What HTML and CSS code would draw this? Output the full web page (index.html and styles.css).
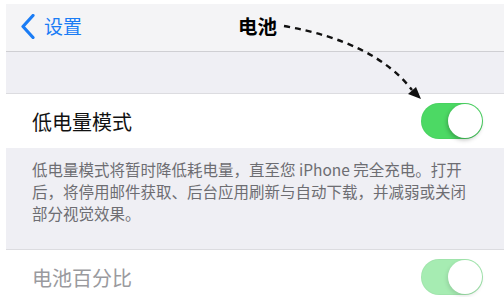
FILE: index.html
```html
<!DOCTYPE html>
<html lang="zh-CN">
<head>
<meta charset="utf-8">
<link rel="stylesheet" href="styles.css">
</head>
<body>
<div class="screen">
  <div class="nav">
    <div class="back">
      <svg class="chev" width="14" height="25" viewBox="0 0 14 25"><path d="M12 1.5 L2 12.5 L12 23.5" fill="none" stroke="#1a7cf5" stroke-width="3.2" stroke-linecap="round" stroke-linejoin="round"/></svg>
      <span>设置</span>
    </div>
    <div class="title">电池</div>
    <div></div>
  </div>
  <div class="gap"></div>
  <div class="row">
    <span class="label">低电量模式</span>
    <span class="toggle"><span class="knob"></span></span>
  </div>
  <div class="note">
    <div class="line">低电量模式将暂时降低耗电量，直至您 iPhone 完全充电。打开</div>
    <div class="line">后，将停用邮件获取、后台应用刷新与自动下载，并减弱或关闭</div>
    <div class="line">部分视觉效果。</div>
  </div>
  <div class="row dim">
    <span class="label">电池百分比</span>
    <span class="toggle"><span class="knob"></span></span>
  </div>
  <svg class="arrow" width="504" height="120" viewBox="0 0 504 120">
    <path d="M284 26 Q 375 42 412 90" fill="none" stroke="#111" stroke-width="2.4" stroke-dasharray="6 5"/>
    <path d="M421 99 L408 94 L416 87 Z" fill="#111"/>
  </svg>
</div>
</body>
</html>
```
FILE: styles.css
```css
html, body {
  margin: 0;
  padding: 0;
  background: #fff;
}
body {
  font-family: "Noto Sans CJK SC", "Noto Sans", sans-serif;
  width: 504px;
  height: 297px;
  overflow: hidden;
}
.screen {
  position: relative;
  padding: 4px 0 0 6px;
}
.nav {
  background: #f4f4f6;
  border-bottom: 1px solid #cfcfd3;
  display: grid;
  grid-template-columns: 1fr auto 1fr;
  align-items: center;
  padding-bottom: 3px;
  box-sizing: border-box;
  height: 48px;
}
.back {
  display: flex;
  align-items: center;
  gap: 9px;
  padding-left: 15px;
  color: #1a7cf5;
  font-size: 19px;
  line-height: 24px;
}
.chev { display: block; }
.title {
  font-size: 19.5px;
  font-weight: 700;
  color: #000;
  line-height: 24px;
  padding-left: 5px;
}
.gap {
  height: 41px;
  background: #efeff4;
  border-bottom: 1px solid #dcdce0;
}
.row {
  height: 54px;
  background: #fff;
  display: flex;
  align-items: center;
  justify-content: space-between;
  padding: 0 21px 0 26px;
  box-sizing: border-box;
}
.label {
  font-size: 20px;
  color: #111;
}
.toggle {
  width: 62px;
  height: 36px;
  border-radius: 18px;
  background: #4cd964;
  position: relative;
  box-shadow: inset 0 0 0 1px rgba(0,0,0,0.03);
}
.knob {
  position: absolute;
  right: 1px;
  top: 1px;
  width: 34px;
  height: 34px;
  border-radius: 50%;
  background: #fff;
  box-shadow: -1px 2px 4px rgba(0,0,0,0.25);
}
.note {
  background: #efeff4;
  height: 102px;
  box-sizing: border-box;
  padding: 10px 0 0 26px;
  border-bottom: 1px solid #dcdce0;
  color: #6d6d72;
  font-size: 15.5px;
  line-height: 22px;
}
.line { white-space: nowrap; }
.dim .label { color: #9a9a9e; }
.dim .toggle { background: #a6ecb2; }
.dim .knob { box-shadow: -1px 2px 4px rgba(0,0,0,0.12); }
.arrow {
  position: absolute;
  left: 0;
  top: 0;
  pointer-events: none;
}
```
